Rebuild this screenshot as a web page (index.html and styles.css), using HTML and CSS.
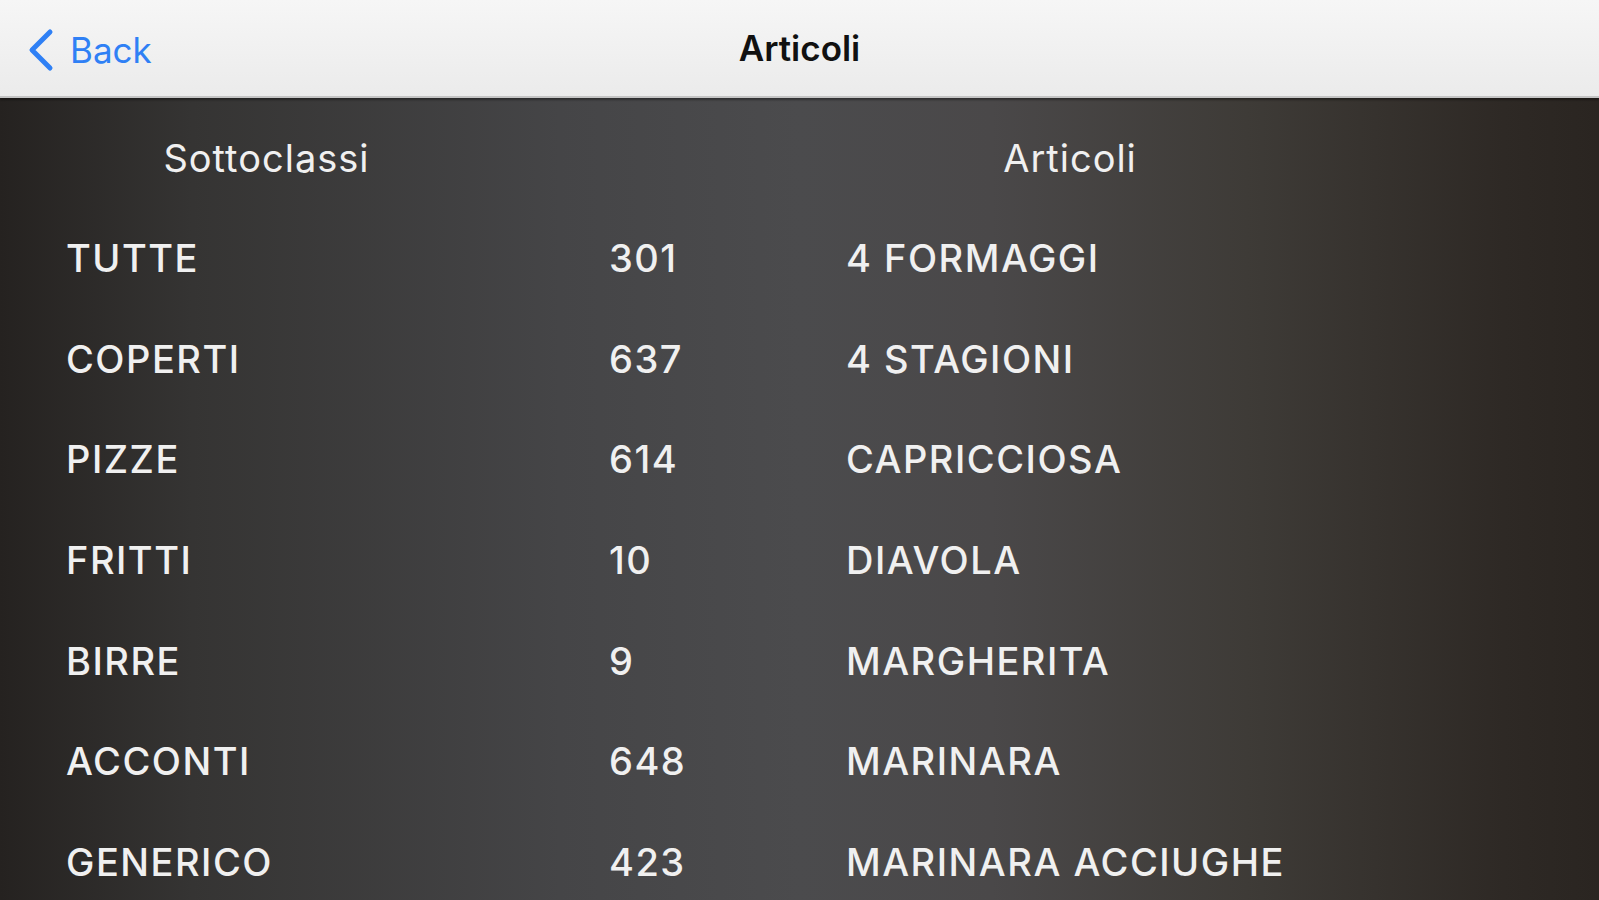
FILE: index.html
```html
<!DOCTYPE html>
<html lang="it">
<head>
    <meta charset="UTF-8">
    <meta name="viewport" content="width=device-width, initial-scale=1.0">
    <title>Articoli</title>
    <link rel="stylesheet" href="styles.css">
</head>
<body>
    <!-- Navigation bar -->
    <div class="navbar">
        <a class="back" href="#">
            <svg class="chevron" width="28" height="44" viewBox="0 0 28 44">
                <path d="M23 4 L5 22 L23 40" fill="none" stroke="#2f80f5" stroke-width="5" stroke-linecap="round" stroke-linejoin="round"/>
            </svg>
            <span>Back</span>
        </a>
        <h1>Articoli</h1>
    </div>

    <!-- Two lists side by side -->
    <div class="lists">
        <div class="subclasses">
            <h2>Sottoclassi</h2>
            <ul>
                <li>TUTTE</li>
                <li>COPERTI</li>
                <li>PIZZE</li>
                <li>FRITTI</li>
                <li>BIRRE</li>
                <li>ACCONTI</li>
                <li>GENERICO</li>
            </ul>
        </div>
        <div class="articles">
            <h2>Articoli</h2>
            <ul>
                <li><span class="code">301</span><span>4 FORMAGGI</span></li>
                <li><span class="code">637</span><span>4 STAGIONI</span></li>
                <li><span class="code">614</span><span>CAPRICCIOSA</span></li>
                <li><span class="code">10</span><span>DIAVOLA</span></li>
                <li><span class="code">9</span><span>MARGHERITA</span></li>
                <li><span class="code">648</span><span>MARINARA</span></li>
                <li><span class="code">423</span><span>MARINARA ACCIUGHE</span></li>
            </ul>
        </div>
    </div>
</body>
</html>
```

FILE: styles.css
```css
/* General Styles */
body {
    margin: 0;
    height: 900px;
    overflow: hidden;
    font-family: Inter, "Noto Sans", sans-serif;
    background: linear-gradient(to right, #252220 0%, #353433 12%, #454547 35%, #4b4b4d 50%, #4a4849 62%, #3e3b37 78%, #2e2925 94%, #2a2521 100%);
    color: #f0f0f0;
}

/* Navbar */
.navbar {
    position: relative;
    height: 96px;
    background: linear-gradient(to bottom, #f6f6f6, #ebebeb);
    border-bottom: 2px solid #c4c4c4;
    box-shadow: 0 2px 2px rgba(0, 0, 0, 0.35);
    display: flex;
    align-items: center;
    justify-content: center;
}
.navbar .back {
    position: absolute;
    left: 27px;
    top: 28px;
    display: flex;
    align-items: center;
    gap: 15px;
    color: #2f80f5;
    text-decoration: none;
    font-size: 35px;
}
.navbar .chevron {
    display: block;
}
.navbar h1 {
    margin: 0;
    font-size: 35px;
    font-weight: 600;
    color: #111111;
}

/* Lists */
.lists {
    display: grid;
    grid-template-columns: 533px 1fr;
}
.lists h2 {
    margin: 0;
    height: 100px;
    padding-top: 10px;
    display: flex;
    align-items: center;
    justify-content: center;
    font-size: 38px;
    font-weight: 400;
    letter-spacing: 1px;
}
.articles h2 {
    padding-left: 8px;
}
.lists ul {
    list-style: none;
    margin: 0;
    padding: 0;
}
.lists li {
    height: 100.6px;
    display: flex;
    align-items: center;
    font-size: 38px;
    font-weight: 500;
    letter-spacing: 1.5px;
}
.subclasses li {
    padding-left: 66px;
}
.articles li {
    padding-left: 76px;
}
.articles .code {
    width: 237px;
}
```
